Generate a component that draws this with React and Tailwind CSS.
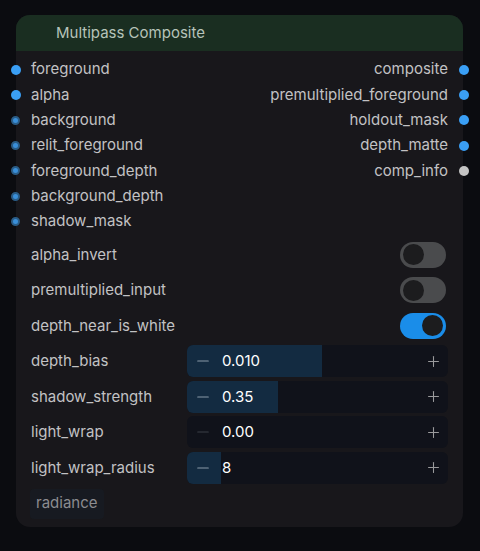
import { Minus, Plus } from "lucide-react";

const inputs = [
  { name: "foreground", linked: true },
  { name: "alpha", linked: true },
  { name: "background" },
  { name: "relit_foreground" },
  { name: "foreground_depth" },
  { name: "background_depth" },
  { name: "shadow_mask" },
];

const outputs = [
  { name: "composite", color: "bg-[#3a9ff5]" },
  { name: "premultiplied_foreground", color: "bg-[#3a9ff5]" },
  { name: "holdout_mask", color: "bg-[#3a9ff5]" },
  { name: "depth_matte", color: "bg-[#3a9ff5]" },
  { name: "comp_info", color: "bg-[#c4c4c4]" },
];

const toggles = [
  { name: "alpha_invert", on: false },
  { name: "premultiplied_input", on: false },
  { name: "depth_near_is_white", on: true },
];

const sliders = [
  { name: "depth_bias", value: "0.010", fill: 135 },
  { name: "shadow_strength", value: "0.35", fill: 91 },
  { name: "light_wrap", value: "0.00", fill: 0 },
  { name: "light_wrap_radius", value: "8", fill: 34 },
];

function Toggle({ on }) {
  return (
    <div
      className={`w-[46px] h-[26px] rounded-full flex items-center px-[3px] ${
        on ? "bg-[#1a8de9] justify-end" : "bg-[#4a4b4d] justify-start"
      }`}
    >
      <div className="w-[21px] h-[21px] rounded-full bg-[#1c1c1e]" />
    </div>
  );
}

export default function App() {
  return (
    <div
      className="w-[480px] h-[551px] bg-[#0b0c10] pt-[15px] pl-[16px]"
      style={{ fontFamily: "Inter, 'Noto Sans', sans-serif" }}
    >
      <div className="w-[447px] h-[512px] rounded-[14px] bg-[#18171b] relative">
        {/* Cabecera */}
        <div className="h-[36px] rounded-t-[14px] bg-[#1a2e21] flex items-center pl-[40px] text-[15px] text-[#b6c3b9]">
          Multipass Composite
        </div>

        {/* Slots */}
        <div className="flex justify-between pt-[6px]">
          <div className="flex flex-col">
            {inputs.map((s) => (
              <div key={s.name} className="h-[25.3px] flex items-center text-[15px] text-[#c2c2c4]">
                <div className="w-[15px] flex justify-center -ml-[8px] mr-[8px]">
                  {s.linked ? (
                    <div className="w-[10px] h-[10px] rounded-full bg-[#3a9ff5]" />
                  ) : (
                    <div className="w-[9px] h-[9px] rounded-full bg-[#3a8fd9] border-[2px] border-[#2a5c86]" />
                  )}
                </div>
                {s.name}
              </div>
            ))}
          </div>
          <div className="flex flex-col items-end">
            {outputs.map((s) => (
              <div key={s.name} className="h-[25.3px] flex items-center text-[15px] text-[#c2c2c4]">
                {s.name}
                <div className="w-[15px] flex justify-center ml-[8px] -mr-[8px]">
                  <div className={`w-[10px] h-[10px] rounded-full ${s.color}`} />
                </div>
              </div>
            ))}
          </div>
        </div>

        {/* Widgets */}
        <div className="flex flex-col pl-[15px] pr-[15px] pt-[3px]">
          {toggles.map((t) => (
            <div key={t.name} className="h-[35.5px] flex items-center justify-between text-[15px] text-[#c2c2c4]">
              {t.name}
              <div className="mr-[2px]">
                <Toggle on={t.on} />
              </div>
            </div>
          ))}
          {sliders.map((s) => (
            <div key={s.name} className="h-[35.5px] flex items-center text-[15px] text-[#c2c2c4]">
              <div className="w-[156px]">{s.name}</div>
              <div className="relative flex-1 h-[32px] rounded-[6px] bg-[#10121a] overflow-hidden flex items-center">
                {s.fill > 0 && (
                  <div className="absolute left-0 top-0 bottom-0 bg-[#132b41]" style={{ width: s.fill }} />
                )}
                <Minus
                  className={`relative ml-[7px] w-[18px] h-[18px] ${s.fill > 0 ? "text-[#8a9aa8]" : "text-[#3a3f46]"}`}
                  strokeWidth={1.6}
                />
                <span className="relative ml-[10px] text-white">{s.value}</span>
                <Plus className="relative ml-auto mr-[6px] w-[17px] h-[17px] text-[#9a9a9c]" strokeWidth={1.5} />
              </div>
            </div>
          ))}
        </div>

        <div className="px-[14px] pt-[3px]">
          <div className="inline-flex items-center h-[30px] px-[6px] rounded-[4px] bg-[#171a21] text-[15px] text-[#8c8c90]">
            radiance
          </div>
        </div>
      </div>
    </div>
  );
}
